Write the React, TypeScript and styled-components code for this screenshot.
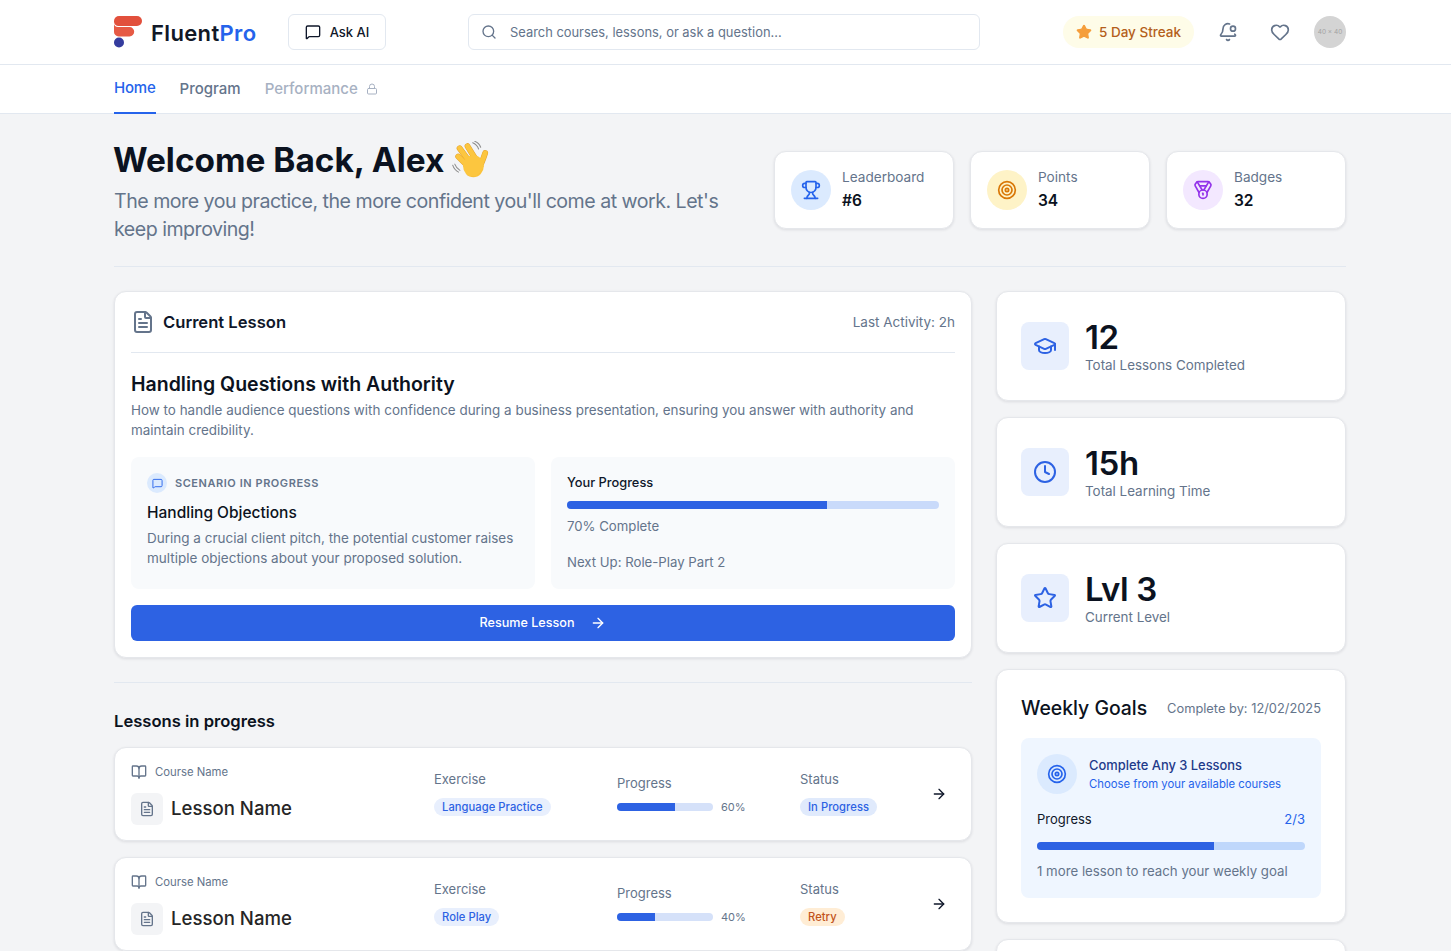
import React from "react";
import styled, { createGlobalStyle } from "styled-components";
import {
  ArrowRight, BellDot, BookOpen, Clock, FileText, GraduationCap, Heart, Lock, Medal,
  MessageSquare, Search, Star, Target, Trophy,
} from "lucide-react";

const FONT = `Inter, "Noto Sans", "Liberation Sans", sans-serif`;

const Global = createGlobalStyle`
  html, body { margin: 0; padding: 0; height: 951px; overflow: hidden; background: #f3f4f6; }
  body { font-family: ${FONT}; color: #0f172a; }
  * { box-sizing: border-box; }
  p, h1, h2, h3 { margin: 0; }
`;

const Page = styled.div`
  width: 100%;
  height: 951px;
  overflow: hidden;
`;

const Header = styled.header`
  height: 65px;
  background: #fff;
  border-bottom: 1px solid #e2e8f0;
  padding: 0 105px 0 114px;
  display: flex;
  align-items: center;
`;

const Brand = styled.div`
  display: flex;
  align-items: center;
  gap: 9px;
  width: 174px;
`;

const BrandName = styled.span`
  font-size: 22px;
  font-weight: 600;
  letter-spacing: 0.35px;
  color: #111827;
  padding-top: 2px;
  em { font-style: normal; color: #2563eb; }
`;

const AskButton = styled.button`
  width: 98px;
  height: 36px;
  background: #fff;
  border: 1px solid #e2e8f0;
  border-radius: 6px;
  font: 500 13px ${FONT};
  color: #0f172a;
  display: flex;
  align-items: center;
  justify-content: center;
  gap: 9px;
  padding: 0 0 1px;
`;

const SearchBox = styled.div`
  width: 512px;
  height: 36px;
  margin-left: 82px;
  border: 1px solid #e2e8f0;
  border-radius: 6px;
  background: #fff;
  padding: 0 12px;
  display: flex;
  align-items: center;
  gap: 13px;
  font-size: 12.9px;
  color: #64748b;
`;

const HeaderRight = styled.div`
  margin-left: auto;
  display: flex;
  align-items: center;
`;

const Streak = styled.div`
  height: 32px;
  width: 131px;
  border-radius: 16px;
  background: #fefce8;
  color: #b45f1b;
  font-size: 13.5px;
  font-weight: 500;
  display: flex;
  align-items: center;
  justify-content: center;
  gap: 7px;
  padding-bottom: 1px;
`;

const IconSlot = styled.span<{ $ml: number }>`
  display: flex;
  margin-left: ${(p) => p.$ml}px;
  color: #64748b;
`;

const Avatar = styled.div`
  width: 32px;
  height: 32px;
  margin-left: 24px;
  border-radius: 50%;
  background: #d4d4d4;
  color: #a3a3a3;
  font-size: 6.5px;
  display: flex;
  align-items: center;
  justify-content: center;
`;

const Nav = styled.nav`
  height: 49px;
  background: #fff;
  border-bottom: 1px solid #e2e8f0;
  padding-left: 114px;
  display: flex;
  gap: 24px;
`;

const NavItem = styled.div<{ $active?: boolean; $disabled?: boolean }>`
  height: 49px;
  display: flex;
  align-items: center;
  gap: 8px;
  font-size: 15px;
  letter-spacing: ${(p) => (p.$active ? "-0.2px" : "0")};
  font-weight: 500;
  color: ${(p) => (p.$active ? "#2563eb" : p.$disabled ? "#a7b1c2" : "#64748b")};
  border-bottom: 2px solid ${(p) => (p.$active ? "#2563eb" : "transparent")};
  padding-bottom: ${(p) => (p.$active ? 3 : 0)}px;
`;

const Main = styled.main`
  width: 1232px;
  margin-left: 114px;
`;

const Hero = styled.section`
  height: 153px;
  border-bottom: 1px solid #e2e8f0;
  display: flex;
  justify-content: space-between;
`;

const HeroText = styled.div`
  width: 630px;
  padding-top: 22px;
`;

const Title = styled.h1`
  font-size: 33.4px;
  line-height: 46px;
  font-weight: 700;
  color: #0b1220;
  display: flex;
  align-items: center;
  gap: 8px;
  margin-left: -1px;
  padding-top: 1px;
`;

const Subtitle = styled.p`
  font-size: 19.6px;
  letter-spacing: -0.5px;
  line-height: 28px;
  color: #64748b;
  margin-top: 4px;
`;

const StatRow = styled.div`
  display: flex;
  gap: 16px;
  padding-top: 37px;
`;

const StatCard = styled.div`
  width: 180px;
  height: 78px;
  background: #fff;
  border: 1px solid #e5e7eb;
  border-radius: 12px;
  box-shadow: 0 1px 3px rgba(15, 23, 42, 0.1);
  padding: 0 16px;
  display: flex;
  align-items: center;
  gap: 11px;
`;

const StatIcon = styled.div<{ $bg: string; $fg: string }>`
  width: 40px;
  height: 40px;
  flex: none;
  border-radius: 50%;
  background: ${(p) => p.$bg};
  color: ${(p) => p.$fg};
  display: flex;
  align-items: center;
  justify-content: center;
`;

const StatLabel = styled.div`
  font-size: 13.6px;
  line-height: 20px;
  color: #64748b;
`;

const StatValue = styled.div`
  font-size: 15.5px;
  line-height: 24px;
  font-weight: 600;
  color: #0b1220;
  margin-top: 2px;
`;

const Columns = styled.div`
  display: grid;
  grid-template-columns: 858px 350px;
  gap: 24px;
  margin-top: 24px;
`;

const LeftCol = styled.div`
  display: flex;
  flex-direction: column;
`;

const RightCol = styled.div`
  display: flex;
  flex-direction: column;
  gap: 16px;
`;

const Card = styled.div`
  background: #fff;
  border: 1px solid #e5e7eb;
  border-radius: 12px;
  box-shadow: 0 1px 3px rgba(15, 23, 42, 0.1);
`;

const LessonCard = styled(Card)`
  height: 367px;
  padding: 0 16px;
`;

const LessonHead = styled.div`
  height: 61px;
  border-bottom: 1px solid #e2e8f0;
  display: flex;
  align-items: center;
  justify-content: space-between;
`;

const LessonHeadLeft = styled.div`
  display: flex;
  align-items: center;
  gap: 8px;
  color: #64748b;
  font-size: 16.6px;
  font-weight: 600;
  span { color: #0f172a; }
`;

const Muted = styled.span`
  font-size: 13.5px;
  color: #64748b;
`;

const CompleteBy = styled(Muted)`
  font-size: 12.85px;
`;

const LessonTitle = styled.h2`
  font-size: 19.5px;
  line-height: 28px;
  font-weight: 600;
  color: #0b1220;
  margin-top: 17px;
`;

const Desc = styled.p`
  font-size: 13.44px;
  line-height: 20px;
  color: #64748b;
  margin-top: 2px;
`;

const PanelRow = styled.div`
  display: grid;
  grid-template-columns: 1fr 1fr;
  gap: 16px;
  margin-top: 17px;
`;

const Panel = styled.div`
  height: 132px;
  background: #f8fafc;
  border-radius: 8px;
  padding: 16px;
`;

const ScenarioTag = styled.div`
  display: flex;
  align-items: center;
  gap: 8px;
  height: 20px;
  font-size: 11px;
  font-weight: 600;
  letter-spacing: 0.55px;
  color: #64748b;
`;

const TinyCircle = styled.span`
  width: 20px;
  height: 20px;
  border-radius: 50%;
  background: #dbeafe;
  color: #2563eb;
  display: flex;
  align-items: center;
  justify-content: center;
`;

const ScenarioTitle = styled.h3`
  font-size: 15.5px;
  line-height: 24px;
  font-weight: 500;
  color: #0b1220;
  margin-top: 8px;
`;

const PanelDesc = styled(Desc)`
  font-size: 13.5px;
  margin-top: 3px;
`;

const PanelHeading = styled.div`
  font-size: 12.8px;
  line-height: 20px;
  font-weight: 500;
  color: #0f172a;
`;

const Track = styled.div<{ $h: number; $bg: string; $w?: number }>`
  height: ${(p) => p.$h}px;
  width: ${(p) => (p.$w ? `${p.$w}px` : "100%")};
  flex: none;
  background: ${(p) => p.$bg};
  border-radius: 999px;
  overflow: hidden;
`;

const Fill = styled.div`
  height: 100%;
  background: #2d62e3;
`;

const TrackSpaced = styled(Track)`
  margin-top: 8px;
`;

const PanelLine = styled.p<{ $mt: number }>`
  font-size: 13.2px;
  line-height: 20px;
  color: #64748b;
  margin-top: ${(p) => p.$mt}px;
`;

const Resume = styled.button`
  width: 100%;
  height: 36px;
  margin-top: 16px;
  border: 0;
  border-radius: 6px;
  background: #2d62e3;
  color: #fff;
  font: 500 12.6px ${FONT};
  display: flex;
  align-items: center;
  justify-content: center;
  gap: 16px;
  padding: 0 0 1px;
`;

const Rule = styled.hr`
  border: 0;
  border-top: 1px solid #e2e8f0;
  margin: 24px 0 0;
`;

const SectionTitle = styled.h2`
  font-size: 16.6px;
  line-height: 28px;
  font-weight: 600;
  color: #0b1220;
  margin: 24px 0 12px;
`;

const RowList = styled.div`
  display: flex;
  flex-direction: column;
  gap: 16px;
`;

const Row = styled(Card)`
  height: 94px;
  padding: 0 16px;
  display: grid;
  grid-template-columns: 303px 183px 183px 1fr auto;
  align-items: center;
`;

const CourseCol = styled.div`
  padding-top: 1px;
`;

const CourseLine = styled.div`
  display: flex;
  align-items: center;
  gap: 8px;
  font-size: 11.3px;
  line-height: 16px;
  color: #64748b;
`;

const LessonLine = styled.div`
  display: flex;
  align-items: center;
  gap: 8px;
  margin-top: 13px;
  font-size: 18.6px;
  font-weight: 500;
  color: #262626;
`;

const LessonName = styled.span`
  padding-bottom: 2px;
`;

const DocTile = styled.span`
  width: 32px;
  height: 32px;
  border-radius: 6px;
  background: #f3f4f6;
  color: #64748b;
  display: flex;
  align-items: center;
  justify-content: center;
`;

const ColLabel = styled.div`
  font-size: 13px;
  line-height: 20px;
  color: #64748b;
`;

const PillCol = styled.div`
  padding-bottom: 3px;
`;

const ProgressCol = styled.div`
  padding-bottom: 2px;
`;

const Pill = styled.span<{ $bg: string; $fg: string }>`
  display: inline-block;
  height: 18px;
  line-height: 18px;
  padding: 0 8px;
  margin-top: 9px;
  border-radius: 9px;
  background: ${(p) => p.$bg};
  color: ${(p) => p.$fg};
  font-size: 11.2px;
  font-weight: 500;
  letter-spacing: 0.05px;
`;

const ProgressLine = styled.div`
  display: flex;
  align-items: center;
  gap: 8px;
  margin-top: 7px;
  font-size: 11px;
  color: #64748b;
`;

const ArrowSlot = styled.span`
  display: flex;
  color: #0f172a;
  margin-right: 8px;
`;

const MetricCard = styled(Card)`
  height: 110px;
  padding: 0 24px;
  display: flex;
  align-items: center;
  gap: 16px;
`;

const MetricIcon = styled.div`
  width: 48px;
  height: 48px;
  flex: none;
  border-radius: 8px;
  background: #e8effd;
  color: #2d62e3;
  display: flex;
  align-items: center;
  justify-content: center;
`;

const MetricText = styled.div`
  padding-top: 2px;
`;

const MetricValue = styled.div`
  font-size: 33px;
  letter-spacing: -0.4px;
  line-height: 36px;
  font-weight: 600;
  color: #0b1220;
`;

const MetricLabel = styled.div`
  font-size: 13.4px;
  line-height: 20px;
  color: #64748b;
`;

const GoalsCard = styled(Card)`
  height: 254px;
  padding: 24px;
`;

const GoalsHead = styled.div`
  display: flex;
  justify-content: space-between;
  align-items: center;
  height: 28px;
`;

const GoalsTitle = styled.h2`
  font-size: 19.4px;
  font-weight: 500;
  color: #0b1220;
`;

const GoalBox = styled.div`
  margin-top: 16px;
  height: 160px;
  background: #eff6ff;
  border-radius: 8px;
  padding: 16px;
`;

const GoalTop = styled.div`
  display: flex;
  align-items: center;
  gap: 12px;
`;

const GoalCircle = styled.div`
  width: 40px;
  height: 40px;
  border-radius: 50%;
  background: #dbeafe;
  color: #2563eb;
  display: flex;
  align-items: center;
  justify-content: center;
`;

const GoalName = styled.div`
  font-size: 12.9px;
  line-height: 20px;
  font-weight: 500;
  color: #1e3a8a;
`;

const GoalSub = styled.div`
  font-size: 11.3px;
  line-height: 16px;
  color: #2563eb;
`;

const GoalProgress = styled.div`
  display: flex;
  justify-content: space-between;
  font-size: 13px;
  line-height: 20px;
  color: #0f172a;
  margin-top: 15px;
  span:last-child { color: #2563eb; }
`;

const GoalTrack = styled(Track)`
  margin-top: 13px;
`;

const GoalNote = styled.p`
  font-size: 13.25px;
  line-height: 20px;
  color: #64748b;
  margin-top: 11px;
`;

const Stub = styled(Card)`
  height: 100px;
`;

const Logo = () => (
  <svg width="28" height="32" viewBox="0 0 28 32" aria-hidden="true">
    <path d="M5 0H23a5 5 0 0 1 0 10H4.500a4.500 4.500 0 0 1-4.500-4.500V5a5 5 0 0 1 5-5Z" fill="#e2503c" />
    <path d="M0 7c0 2.500 1.500 4 4 4H15.500a4.700 4.700 0 0 1 0 9.400H4.500A4.500 4.500 0 0 1 0 16Z" fill="#e65a45" />
    <circle cx="5" cy="26.500" r="5" fill="#343c9e" />
  </svg>
);

const Wave = () => (
  <svg width="38" height="38" viewBox="40 25 110 110" aria-hidden="true">
    <g fill="none" strokeLinecap="round">
      <path d="M100 30c8 3 14 10 17 18M106 26c8 3 14 9 17 17" stroke="#8c8c8c" strokeWidth="3" />
      <path d="M42 95c3 9 9 16 17 20M48 92c3 8 8 14 15 18" stroke="#8c8c8c" strokeWidth="3" />
      <g stroke="#e6a32a" strokeWidth="17">
        <path d="M62 46L96 92" /><path d="M85 40L112 84" /><path d="M58 70L92 104" /><path d="M136 60C132 72 128 84 122 96" />
      </g>
      <g stroke="#fcc63f" strokeWidth="14">
        <path d="M62 46L96 92" /><path d="M85 40L112 84" /><path d="M58 70L92 104" /><path d="M136 60C132 72 128 84 122 96" />
      </g>
    </g>
    <ellipse cx="102" cy="98" rx="30" ry="32" fill="#fcc63f" />
    <path d="M76 116c12 18 38 16 50-4 4-8 6-14 8-22-4 22-18 38-36 38-8 0-16-4-22-12Z" fill="#eda92c" />
  </svg>
);

const rows = [
  { ex: "Language Practice", pct: 60, status: "In Progress", sBg: "#e0eafc", sFg: "#2d62e3" },
  { ex: "Role Play", pct: 40, status: "Retry", sBg: "#ffedd5", sFg: "#c2541b" },
];

const stats = [
  { label: "Leaderboard", value: "#6", bg: "#dbeafe", fg: "#2563eb", Icon: Trophy },
  { label: "Points", value: "34", bg: "#fef3c7", fg: "#d97706", Icon: Target },
  { label: "Badges", value: "32", bg: "#f3e8ff", fg: "#9333ea", Icon: Medal },
];

const metrics = [
  { value: "12", label: "Total Lessons Completed", Icon: GraduationCap },
  { value: "15h", label: "Total Learning Time", Icon: Clock },
  { value: "Lvl 3", label: "Current Level", Icon: Star },
];

export default function App() {
  return (
    <Page>
      <Global />
      <Header>
        <Brand>
          <Logo />
          <BrandName>Fluent<em>Pro</em></BrandName>
        </Brand>
        <AskButton><MessageSquare size={16} />Ask AI</AskButton>
        <SearchBox><Search size={16} />Search courses, lessons, or ask a question...</SearchBox>
        <HeaderRight>
          <Streak><Star size={16} fill="#f59e3b" color="#f59e3b" />5 Day Streak</Streak>
          <IconSlot $ml={24}><BellDot size={20} /></IconSlot>
          <IconSlot $ml={32}><Heart size={20} /></IconSlot>
          <Avatar>40 × 40</Avatar>
        </HeaderRight>
      </Header>
      <Nav>
        <NavItem $active>Home</NavItem>
        <NavItem>Program</NavItem>
        <NavItem $disabled>Performance <Lock size={12} /></NavItem>
      </Nav>
      <Main>
        <Hero>
          <HeroText>
            <Title>Welcome Back, Alex <Wave /></Title>
            <Subtitle>The more you practice, the more confident you'll come at work. Let's keep improving!</Subtitle>
          </HeroText>
          <StatRow>
            {stats.map(({ label, value, bg, fg, Icon }) => (
              <StatCard key={label}>
                <StatIcon $bg={bg} $fg={fg}><Icon size={20} /></StatIcon>
                <div>
                  <StatLabel>{label}</StatLabel>
                  <StatValue>{value}</StatValue>
                </div>
              </StatCard>
            ))}
          </StatRow>
        </Hero>
        <Columns>
          <LeftCol>
            <LessonCard>
              <LessonHead>
                <LessonHeadLeft><FileText size={24} /><span>Current Lesson</span></LessonHeadLeft>
                <Muted>Last Activity: 2h</Muted>
              </LessonHead>
              <LessonTitle>Handling Questions with Authority</LessonTitle>
              <Desc>How to handle audience questions with confidence during a business presentation, ensuring you answer with authority and maintain credibility.</Desc>
              <PanelRow>
                <Panel>
                  <ScenarioTag><TinyCircle><MessageSquare size={11} /></TinyCircle>SCENARIO IN PROGRESS</ScenarioTag>
                  <ScenarioTitle>Handling Objections</ScenarioTitle>
                  <PanelDesc>During a crucial client pitch, the potential customer raises multiple objections about your proposed solution.</PanelDesc>
                </Panel>
                <Panel>
                  <PanelHeading>Your Progress</PanelHeading>
                  <TrackSpaced $h={8} $bg="#c9dafa"><Fill style={{ width: "70%" }} /></TrackSpaced>
                  <PanelLine $mt={7}>70% Complete</PanelLine>
                  <PanelLine $mt={16}>Next Up: Role-Play Part 2</PanelLine>
                </Panel>
              </PanelRow>
              <Resume>Resume Lesson <ArrowRight size={16} /></Resume>
            </LessonCard>
            <Rule />
            <SectionTitle>Lessons in progress</SectionTitle>
            <RowList>
              {rows.map((r) => (
                <Row key={r.ex}>
                  <CourseCol>
                    <CourseLine><BookOpen size={16} />Course Name</CourseLine>
                    <LessonLine><DocTile><FileText size={16} /></DocTile><LessonName>Lesson Name</LessonName></LessonLine>
                  </CourseCol>
                  <PillCol>
                    <ColLabel>Exercise</ColLabel>
                    <Pill $bg="#e8effd" $fg="#2d62e3">{r.ex}</Pill>
                  </PillCol>
                  <ProgressCol>
                    <ColLabel>Progress</ColLabel>
                    <ProgressLine>
                      <Track $h={8} $w={96} $bg="#d5e1f9"><Fill style={{ width: `${r.pct}%` }} /></Track>
                      {r.pct}%
                    </ProgressLine>
                  </ProgressCol>
                  <PillCol>
                    <ColLabel>Status</ColLabel>
                    <Pill $bg={r.sBg} $fg={r.sFg}>{r.status}</Pill>
                  </PillCol>
                  <ArrowSlot><ArrowRight size={16} /></ArrowSlot>
                </Row>
              ))}
            </RowList>
          </LeftCol>
          <RightCol>
            {metrics.map(({ value, label, Icon }) => (
              <MetricCard key={label}>
                <MetricIcon><Icon size={24} /></MetricIcon>
                <MetricText>
                  <MetricValue>{value}</MetricValue>
                  <MetricLabel>{label}</MetricLabel>
                </MetricText>
              </MetricCard>
            ))}
            <GoalsCard>
              <GoalsHead>
                <GoalsTitle>Weekly Goals</GoalsTitle>
                <CompleteBy>Complete by: 12/02/2025</CompleteBy>
              </GoalsHead>
              <GoalBox>
                <GoalTop>
                  <GoalCircle><Target size={20} /></GoalCircle>
                  <div>
                    <GoalName>Complete Any 3 Lessons</GoalName>
                    <GoalSub>Choose from your available courses</GoalSub>
                  </div>
                </GoalTop>
                <GoalProgress><span>Progress</span><span>2/3</span></GoalProgress>
                <GoalTrack $h={8} $bg="#bfd7fb"><Fill style={{ width: "66%" }} /></GoalTrack>
                <GoalNote>1 more lesson to reach your weekly goal</GoalNote>
              </GoalBox>
            </GoalsCard>
            <Stub />
          </RightCol>
        </Columns>
      </Main>
    </Page>
  );
}
